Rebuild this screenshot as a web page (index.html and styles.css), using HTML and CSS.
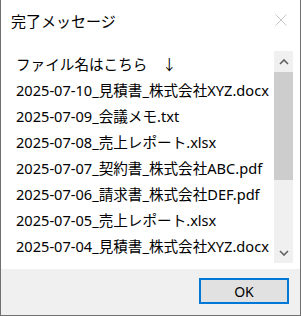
FILE: index.html
```html
<!DOCTYPE html>
<html lang="ja">
<head>
  <meta charset="UTF-8" />
  <meta name="viewport" content="width=device-width, initial-scale=1.0"/>
  <title>完了メッセージ</title>
  <link rel="stylesheet" href="styles.css">
</head>
<body>

  <div class="dialog">
    <div class="titlebar">
      <span class="title">完了メッセージ</span>
      <svg class="close" width="12" height="12" viewBox="0 0 12 12">
        <path d="M0.5 0.5 L11.5 11.5 M11.5 0.5 L0.5 11.5" stroke="#c6c6c6" stroke-width="1" fill="none"/>
      </svg>
    </div>

    <div class="content">
      <div class="listbox">
        <ul class="items">
          <li>ファイル名はこちら　↓</li>
          <li>2025-07-10_見積書_株式会社XYZ.docx</li>
          <li>2025-07-09_会議メモ.txt</li>
          <li>2025-07-08_売上レポート.xlsx</li>
          <li>2025-07-07_契約書_株式会社ABC.pdf</li>
          <li>2025-07-06_請求書_株式会社DEF.pdf</li>
          <li>2025-07-05_売上レポート.xlsx</li>
          <li>2025-07-04_見積書_株式会社XYZ.docx</li>
        </ul>
        <div class="scrollbar">
          <div class="arrow">
            <svg width="10" height="6" viewBox="0 0 10 6"><path d="M1 5 L5 1 L9 5" stroke="#606060" stroke-width="1.6" fill="none"/></svg>
          </div>
          <div class="track">
            <div class="thumb"></div>
          </div>
          <div class="arrow">
            <svg width="10" height="6" viewBox="0 0 10 6"><path d="M1 1 L5 5 L9 1" stroke="#606060" stroke-width="1.6" fill="none"/></svg>
          </div>
        </div>
      </div>
    </div>

    <div class="footer">
      <button class="ok">OK</button>
    </div>
  </div>

</body>
</html>
```

FILE: styles.css
```css
body {
  margin: 0;
  font-family: 'Noto Sans', 'Noto Sans CJK JP', sans-serif;
  background: #ffffff;
}

.dialog {
  width: 301px;
  height: 316px;
  box-sizing: border-box;
  border: 1px solid #707070;
  border-top: none;
  background: #ffffff;
  display: flex;
  flex-direction: column;
}

.titlebar {
  height: 40px;
  display: flex;
  align-items: center;
  justify-content: space-between;
  padding: 0 13px 0 10px;
}

.title {
  font-size: 15px;
  color: #000;
}

.close {
  margin-top: -1px;
}

.content {
  flex: 1;
  padding: 11px 7px 0 12px;
}

.listbox {
  display: flex;
  height: 212px;
}

.items {
  list-style: none;
  margin: 0;
  padding: 0 0 0 3px;
  flex: 1;
  overflow: hidden;
  white-space: nowrap;
}

.items li {
  height: 26px;
  line-height: 26px;
  font-size: 14.6px;
  color: #000;
}

.scrollbar {
  width: 19px;
  background: #f0f0f0;
  display: flex;
  flex-direction: column;
}

.arrow {
  height: 21px;
  display: flex;
  align-items: center;
  justify-content: center;
}

.track {
  flex: 1;
}

.thumb {
  height: 108px;
  background: #cdcdcd;
}

.footer {
  height: 46px;
  background: #f0f0f0;
  display: flex;
  justify-content: flex-end;
  align-items: flex-start;
  padding: 9px 11px 0 0;
  box-sizing: border-box;
}

.ok {
  width: 90px;
  height: 26px;
  background: #e1e1e1;
  border: 2px solid #0078d7;
  font-family: 'Noto Sans', sans-serif;
  font-size: 14px;
  color: #000;
  padding: 0;
}
```
